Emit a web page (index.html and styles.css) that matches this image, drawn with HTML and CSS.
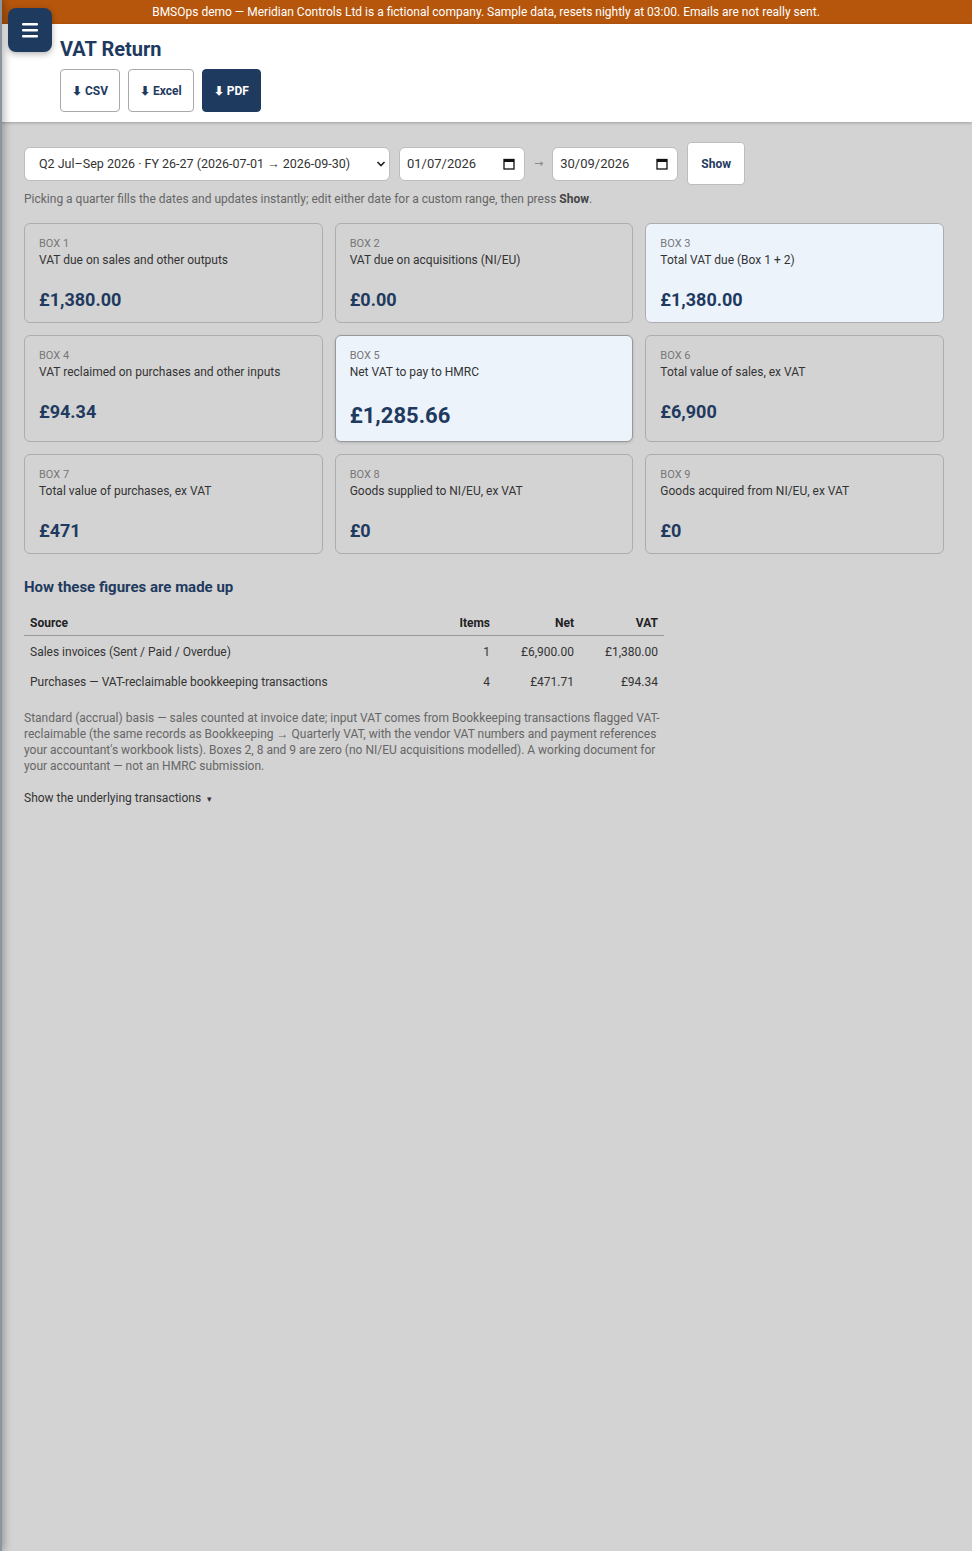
FILE: index.html
```html
<!DOCTYPE html>
<html lang="en-GB">
<head>
    <meta charset="UTF-8">
    <meta name="viewport" content="width=device-width, initial-scale=1.0">
    <title>VAT Return - BMSOps</title>
    <link rel="stylesheet" href="styles.css">
</head>
<body>
    <div class="demo-banner">BMSOps demo — Meridian Controls Ltd is a fictional company. Sample data, resets nightly at 03:00. Emails are not really sent.</div>

    <aside class="sidebar"></aside>
    <button class="menu-btn" aria-label="Menu">
        <svg width="20" height="18" viewBox="0 0 20 18">
            <rect x="2" y="2" width="16" height="2.4" rx="1" fill="#fff"/>
            <rect x="2" y="8" width="16" height="2.4" rx="1" fill="#fff"/>
            <rect x="2" y="14" width="16" height="2.4" rx="1" fill="#fff"/>
        </svg>
    </button>

    <header class="page-header">
        <h1>VAT Return</h1>
        <div class="export-btns">
            <button class="btn">⬇ CSV</button>
            <button class="btn">⬇ Excel</button>
            <button class="btn btn-primary">⬇ PDF</button>
        </div>
    </header>

    <main class="content">
        <div class="filter-row">
            <div class="select-wrap">
                <select class="quarter">
                    <option>Q2 Jul–Sep 2026 · FY 26-27 (2026-07-01 → 2026-09-30)</option>
                </select>
                <svg class="chev" width="10" height="8" viewBox="0 0 10 8"><path d="M1.5 2 L5 5.5 L8.5 2" fill="none" stroke="#222" stroke-width="1.6"/></svg>
            </div>
            <div class="date-field">
                <input type="text" value="01/07/2026">
                <svg width="12" height="12" viewBox="0 0 12 12"><rect x="1" y="1.5" width="10" height="9.5" fill="none" stroke="#111" stroke-width="1.3"/><rect x="1" y="1.5" width="10" height="2.5" fill="#111"/></svg>
            </div>
            <span class="arrow">→</span>
            <div class="date-field">
                <input type="text" value="30/09/2026">
                <svg width="12" height="12" viewBox="0 0 12 12"><rect x="1" y="1.5" width="10" height="9.5" fill="none" stroke="#111" stroke-width="1.3"/><rect x="1" y="1.5" width="10" height="2.5" fill="#111"/></svg>
            </div>
            <button class="btn show-btn">Show</button>
        </div>
        <p class="hint">Picking a quarter fills the dates and updates instantly; edit either date for a custom range, then press <b>Show</b>.</p>

        <div class="boxes">
            <div class="box">
                <div class="box-no">BOX 1</div>
                <div class="box-desc">VAT due on sales and other outputs</div>
                <div class="box-val">£1,380.00</div>
            </div>
            <div class="box">
                <div class="box-no">BOX 2</div>
                <div class="box-desc">VAT due on acquisitions (NI/EU)</div>
                <div class="box-val">£0.00</div>
            </div>
            <div class="box hl">
                <div class="box-no">BOX 3</div>
                <div class="box-desc">Total VAT due (Box 1 + 2)</div>
                <div class="box-val">£1,380.00</div>
            </div>
            <div class="box">
                <div class="box-no">BOX 4</div>
                <div class="box-desc">VAT reclaimed on purchases and other inputs</div>
                <div class="box-val">£94.34</div>
            </div>
            <div class="box hl main">
                <div class="box-no">BOX 5</div>
                <div class="box-desc">Net VAT to pay to HMRC</div>
                <div class="box-val">£1,285.66</div>
            </div>
            <div class="box">
                <div class="box-no">BOX 6</div>
                <div class="box-desc">Total value of sales, ex VAT</div>
                <div class="box-val">£6,900</div>
            </div>
            <div class="box">
                <div class="box-no">BOX 7</div>
                <div class="box-desc">Total value of purchases, ex VAT</div>
                <div class="box-val">£471</div>
            </div>
            <div class="box">
                <div class="box-no">BOX 8</div>
                <div class="box-desc">Goods supplied to NI/EU, ex VAT</div>
                <div class="box-val">£0</div>
            </div>
            <div class="box">
                <div class="box-no">BOX 9</div>
                <div class="box-desc">Goods acquired from NI/EU, ex VAT</div>
                <div class="box-val">£0</div>
            </div>
        </div>

        <h2>How these figures are made up</h2>
        <table class="breakdown">
            <thead>
                <tr>
                    <th>Source</th>
                    <th class="num c-items">Items</th>
                    <th class="num c-money">Net</th>
                    <th class="num c-money">VAT</th>
                </tr>
            </thead>
            <tbody>
                <tr>
                    <td>Sales invoices (Sent / Paid / Overdue)</td>
                    <td class="num">1</td>
                    <td class="num">£6,900.00</td>
                    <td class="num">£1,380.00</td>
                </tr>
                <tr>
                    <td>Purchases — VAT-reclaimable bookkeeping transactions</td>
                    <td class="num">4</td>
                    <td class="num">£471.71</td>
                    <td class="num">£94.34</td>
                </tr>
            </tbody>
        </table>

        <p class="note">Standard (accrual) basis — sales counted at invoice date; input VAT comes from Bookkeeping transactions flagged VAT-reclaimable (the same records as Bookkeeping → Quarterly VAT, with the vendor VAT numbers and payment references your accountant's workbook lists). Boxes 2, 8 and 9 are zero (no NI/EU acquisitions modelled). A working document for your accountant — not an HMRC submission.</p>

        <details class="underlying">
            <summary>Show the underlying transactions <span class="tri">▾</span></summary>
        </details>
    </main>
</body>
</html>
```

FILE: styles.css
```css
html, body {
    margin: 0;
    padding: 0;
}

body {
    font-family: Roboto, "Liberation Sans", Arial, sans-serif;
    font-size: 12px;
    color: #222;
    background-color: #d3d3d3;
    min-height: 100vh;
}

.demo-banner {
    background-color: #b5560c;
    color: #fff;
    text-align: center;
    height: 24px;
    line-height: 25px;
    font-size: 12px;
}

/* off-canvas sidebar, only its edge shadow shows */
.sidebar {
    position: fixed;
    top: 0;
    bottom: 0;
    left: -258px;
    width: 260px;
    background-color: #8c959e;
    box-shadow: 2px 0 8px rgba(0, 0, 0, 0.3);
    z-index: 5;
}

.menu-btn {
    position: fixed;
    top: 8px;
    left: 8px;
    width: 44px;
    height: 44px;
    border: none;
    border-radius: 8px;
    background-color: #1f3a5f;
    box-shadow: 0 2px 6px rgba(0, 0, 0, 0.3);
    display: flex;
    align-items: center;
    justify-content: center;
    padding: 0;
    z-index: 10;
}

.page-header {
    background-color: #fff;
    padding: 12px 20px 10px 60px;
    box-shadow: 0 1px 3px rgba(0, 0, 0, 0.25);
}

h1 {
    margin: 0 0 7px;
    font-size: 20px;
    line-height: 26px;
    color: #1f3a5f;
    font-weight: 700;
}

.export-btns {
    display: flex;
    gap: 8px;
}

.btn {
    font-family: inherit;
    font-size: 12px;
    font-weight: 700;
    height: 43px;
    padding: 0 11px;
    background-color: #fff;
    color: #1f3a5f;
    border: 1px solid #a9a9a9;
    border-radius: 4px;
    cursor: pointer;
}

.btn-primary {
    background-color: #1f3a5f;
    border-color: #1f3a5f;
    color: #fff;
}

.content {
    padding: 20px 28px 40px 24px;
}

.filter-row {
    display: flex;
    align-items: center;
    gap: 9px;
}

.select-wrap {
    position: relative;
}

.quarter {
    appearance: none;
    -webkit-appearance: none;
    font-family: inherit;
    font-size: 12.5px;
    color: #333;
    width: 366px;
    height: 34px;
    padding: 0 28px 0 14px;
    background-color: #fff;
    border: 1px solid #bdbdbd;
    border-radius: 6px;
}

.chev {
    position: absolute;
    right: 4px;
    top: 13px;
    pointer-events: none;
}

.date-field {
    display: flex;
    align-items: center;
    width: 126px;
    height: 34px;
    box-sizing: border-box;
    padding: 0 9px 0 7px;
    background-color: #fff;
    border: 1px solid #bdbdbd;
    border-radius: 6px;
}

.date-field input {
    border: none;
    outline: none;
    width: 90px;
    font-family: inherit;
    font-size: 13px;
    color: #333;
    padding: 0;
    background: transparent;
}

.date-field svg {
    margin-left: auto;
}

.arrow {
    font-family: "DejaVu Sans", sans-serif;
    color: #888;
    font-size: 11px;
}

.show-btn {
    width: 58px;
    padding: 0;
    border-color: #bdbdbd;
}

.hint {
    margin: 6px 0 16px;
    color: #666;
    font-size: 12px;
    line-height: 16px;
}

.hint b {
    color: #444;
}

.boxes {
    display: grid;
    grid-template-columns: repeat(3, 1fr);
    gap: 12px;
}

.box {
    border: 1px solid #adadad;
    border-radius: 6px;
    padding: 12px 14px 10px;
}

.box.hl {
    background-color: #edf3fb;
}

.box.main {
    border-color: #989898;
    box-shadow: 0 1px 3px rgba(0, 0, 0, 0.15);
}

.box-no {
    font-size: 11px;
    line-height: 16px;
    color: #777;
    text-transform: uppercase;
}

.box-desc {
    font-size: 12px;
    line-height: 17px;
    color: #333;
}

.box-val {
    margin-top: 19px;
    font-size: 18px;
    line-height: 24px;
    font-weight: 700;
    color: #1f3a5f;
}

.box.main .box-val {
    font-size: 22px;
    line-height: 30px;
    margin-top: 20px;
}

h2 {
    margin: 23px 0 12px;
    font-size: 15px;
    line-height: 20px;
    color: #1f3a5f;
}

.breakdown {
    width: 640px;
    border-collapse: collapse;
    font-size: 12px;
}

.breakdown th {
    text-align: left;
    font-weight: 700;
    padding: 6px 6px 4px;
    line-height: 16px;
    border-bottom: 1px solid #999;
    color: #222;
}

.breakdown .c-items {
    width: 60px;
}

.breakdown .c-money {
    width: 72px;
}

.breakdown td {
    padding: 8px 6px 6px;
    line-height: 16px;
    color: #333;
}

.breakdown .num {
    text-align: right;
    white-space: nowrap;
}

.note {
    margin: 14px 0 0;
    max-width: 640px;
    color: #666;
    font-size: 12px;
    line-height: 16px;
}

.underlying {
    margin-top: 16px;
}

.underlying summary {
    list-style: none;
    cursor: pointer;
    color: #333;
    font-size: 12px;
    line-height: 16px;
}

.underlying summary::-webkit-details-marker {
    display: none;
}

.tri {
    font-size: 9px;
    margin-left: 3px;
}
```
